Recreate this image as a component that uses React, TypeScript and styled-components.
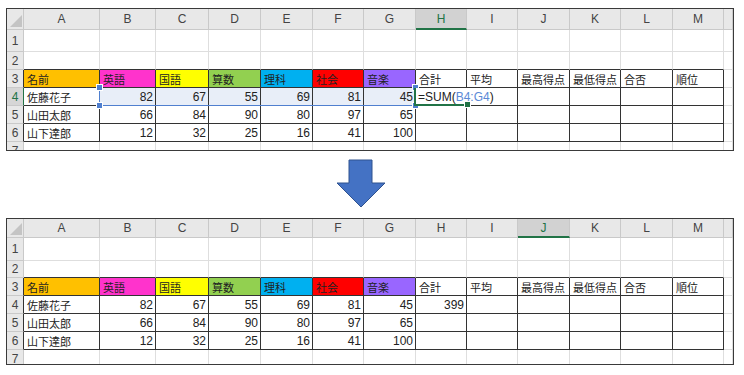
import React from "react";
import styled, { createGlobalStyle } from "styled-components";

const GlobalStyle = createGlobalStyle`
  html, body {
    margin: 0;
    padding: 0;
    background: #fff;
  }
  body {
    font-family: "Liberation Sans", "Noto Sans CJK JP", sans-serif;
  }
`;

const LETTERS = ["A", "B", "C", "D", "E", "F", "G", "H", "I", "J", "K", "L", "M"];
const COL_WIDTHS = [76, 56, 53, 52, 52, 51, 52, 51, 51, 52, 51, 52, 51];

const HEADINGS = [
  { label: "名前", bg: "#ffc000" },
  { label: "英語", bg: "#ff33cc" },
  { label: "国語", bg: "#ffff00" },
  { label: "算数", bg: "#92d050" },
  { label: "理科", bg: "#00b0f0" },
  { label: "社会", bg: "#ff0000" },
  { label: "音楽", bg: "#9966ff" },
  { label: "合計" },
  { label: "平均" },
  { label: "最高得点" },
  { label: "最低得点" },
  { label: "合否" },
  { label: "順位" },
];

const STUDENTS = [
  { name: "佐藤花子", scores: [82, 67, 55, 69, 81, 45] },
  { name: "山田太郎", scores: [66, 84, 90, 80, 97, 65] },
  { name: "山下達郎", scores: [12, 32, 25, 16, 41, 100] },
];

const DARK = "#333";
const GRID = "#dedede";
const HEAD_BG = "#e8e8e8";
const HEAD_LINE = "#c9c9c9";
const GREEN = "#217346";
const BLUE = "#4f7fcf";

const Page = styled.div`
  width: 744px;
  height: 375px;
  padding: 8px 0 0 6px;
  box-sizing: border-box;
  display: flex;
  flex-direction: column;
`;

const Sheet = styled.div<{ $rows: string; $height: number }>`
  display: grid;
  grid-template-columns: 17px ${COL_WIDTHS.map((w) => `${w}px`).join(" ")} 1fr;
  grid-template-rows: ${(p) => p.$rows};
  width: 728px;
  height: ${(p) => p.$height}px;
  box-sizing: border-box;
  border: 1px solid #3a3a3a;
  overflow: hidden;
  background: #fff;
`;

const Corner = styled.div`
  grid-row: 1;
  grid-column: 1;
  background: ${HEAD_BG};
  border-right: 1px solid ${HEAD_LINE};
  border-bottom: 1px solid ${HEAD_LINE};
  display: flex;
  align-items: flex-end;
  justify-content: flex-end;
  padding: 0 1px 2px 0;
`;

const ColHead = styled.div<{ $c: number; $active?: boolean }>`
  grid-row: 1;
  grid-column: ${(p) => p.$c + 1};
  background: ${(p) => (p.$active ? "#d2d2d2" : HEAD_BG)};
  border-right: 1px solid ${HEAD_LINE};
  border-bottom: ${(p) => (p.$active ? `2px solid ${GREEN}` : `1px solid ${HEAD_LINE}`)};
  display: flex;
  align-items: center;
  justify-content: center;
  font-size: 12px;
  color: ${(p) => (p.$active ? GREEN : "#444")};
`;

const RowHead = styled.div<{ $r: number; $active?: boolean; $edge?: boolean }>`
  grid-row: ${(p) => p.$r + 1};
  grid-column: 1;
  box-sizing: border-box;
  background: ${(p) => (p.$active ? "#d6d6d6" : HEAD_BG)};
  border-right: 1px solid ${(p) => (p.$active ? GREEN : p.$edge ? DARK : HEAD_LINE)};
  border-bottom: 1px solid ${HEAD_LINE};
  display: flex;
  align-items: center;
  justify-content: center;
  font-size: 12px;
  color: ${(p) => (p.$active ? GREEN : "#444")};
`;

const Cell = styled.div<{
  $r: number;
  $c: number;
  $right: string;
  $bottom: string;
  $bg?: string;
  $num?: boolean;
}>`
  grid-row: ${(p) => p.$r + 1};
  grid-column: ${(p) => p.$c + 1};
  box-sizing: border-box;
  min-width: 0;
  border-right: 1px solid ${(p) => p.$right};
  border-bottom: 1px solid ${(p) => p.$bottom};
  background: ${(p) => p.$bg ?? "#fff"};
  display: flex;
  align-items: center;
  justify-content: ${(p) => (p.$num ? "flex-end" : "flex-start")};
  padding: ${(p) => (p.$num ? "1px 2px 0 0" : "1px 0 0 3px")};
  white-space: nowrap;
  overflow: hidden;
  color: #222;
  font-family: ${(p) =>
    p.$num ? `"Liberation Sans", sans-serif` : `"Noto Sans CJK JP", sans-serif`};
  font-size: ${(p) => (p.$num ? "12px" : "11px")};
`;

const RangeBox = styled.div`
  grid-row: 5;
  grid-column: 3 / 9;
  margin-left: -1px;
  border: 1px solid ${BLUE};
  border-top: none;
  position: relative;
  z-index: 1;
`;

const Handle = styled.span<{ $color: string; $x: "left" | "right"; $y: "top" | "bottom" }>`
  position: absolute;
  width: 5px;
  height: 5px;
  background: ${(p) => p.$color};
  border: 1px solid #fff;
  ${(p) => p.$x}: -4px;
  ${(p) => p.$y}: -4px;
`;

const EditBox = styled.div`
  grid-row: 5;
  grid-column: 9;
  margin-left: -2px;
  border-left: 2px solid ${GREEN};
  border-bottom: 2px solid ${GREEN};
  background: #fff;
  position: relative;
  z-index: 2;
  display: flex;
  align-items: center;
  padding: 1px 0 0 2px;
  white-space: nowrap;
  font-size: 12px;
  color: #222;
`;

const Ref = styled.span`
  color: #5b8ad6;
`;

const ArrowRow = styled.div`
  height: 67px;
  box-sizing: border-box;
  padding: 8px 0 0 330px;
`;

const tableRight = (r: number, c: number) =>
  r >= 3 && r <= 6 && c >= 1 && c <= 13 ? DARK : GRID;
const tableBottom = (r: number, c: number) =>
  r >= 2 && r <= 6 && c >= 1 && c <= 13 ? DARK : GRID;

function cellContent(r: number, c: number, after: boolean) {
  if (r === 3 && c <= 13) {
    return { text: HEADINGS[c - 1].label, bg: HEADINGS[c - 1].bg };
  }
  if (r >= 4 && r <= 6) {
    const s = STUDENTS[r - 4];
    if (c === 1) return { text: s.name };
    if (c >= 2 && c <= 7) {
      return {
        text: String(s.scores[c - 2]),
        num: true,
        bg: !after && r === 4 ? "#e8eef8" : undefined,
      };
    }
    if (c === 8 && r === 4 && after) {
      return { text: String(s.scores.reduce((a, b) => a + b, 0)), num: true };
    }
  }
  return { text: "" };
}

function Spreadsheet({ after }: { after: boolean }) {
  const rows = after
    ? "19px 23px 17px 18px 18px 18px 18px 18px"
    : "21px 22px 18px 18px 18px 18px 18px 18px";
  // index into LETTERS: H before, J after
  const activeCol = after ? 9 : 7;
  const cells: React.ReactNode[] = [];

  for (let r = 1; r <= 7; r++) {
    for (let c = 1; c <= 14; c++) {
      const { text, bg, num } = cellContent(r, c, after);
      cells.push(
        <Cell
          key={`${r}-${c}`}
          $r={r}
          $c={c}
          $right={tableRight(r, c)}
          $bottom={tableBottom(r, c)}
          $bg={bg}
          $num={num}
        >
          {text}
        </Cell>
      );
    }
  }

  return (
    <Sheet $rows={rows} $height={after ? 147 : 143}>
      <Corner>
        <svg width="12" height="12" viewBox="0 0 12 12">
          <polygon points="12,0 12,12 0,12" fill="#c4c4c4" />
        </svg>
      </Corner>
      {LETTERS.map((l, i) => (
        <ColHead key={l} $c={i + 1} $active={i === activeCol}>
          {l}
        </ColHead>
      ))}
      <ColHead $c={14} />
      {[1, 2, 3, 4, 5, 6, 7].map((r) => (
        <RowHead key={r} $r={r} $active={!after && r === 4} $edge={r >= 3 && r <= 6}>
          {r}
        </RowHead>
      ))}
      {cells}
      {!after && (
        <>
          <RangeBox>
            <Handle $color={BLUE} $x="left" $y="top" />
            <Handle $color={BLUE} $x="left" $y="bottom" />
            <Handle $color={BLUE} $x="right" $y="top" />
            <Handle $color={BLUE} $x="right" $y="bottom" />
          </RangeBox>
          <EditBox>
            =SUM(<Ref>B4:G4</Ref>)
            <Handle $color={GREEN} $x="right" $y="bottom" />
          </EditBox>
        </>
      )}
    </Sheet>
  );
}

function DownArrow() {
  return (
    <svg width="50" height="50" viewBox="0 0 50 50">
      <polygon
        points="13,1 36,1 36,24 49,24 25,48 1,24 13,24"
        fill="#4472c4"
        stroke="#2f528f"
        strokeWidth="1"
      />
    </svg>
  );
}

export default function App() {
  return (
    <>
      <GlobalStyle />
      <Page>
        <Spreadsheet after={false} />
        <ArrowRow>
          <DownArrow />
        </ArrowRow>
        <Spreadsheet after />
      </Page>
    </>
  );
}
